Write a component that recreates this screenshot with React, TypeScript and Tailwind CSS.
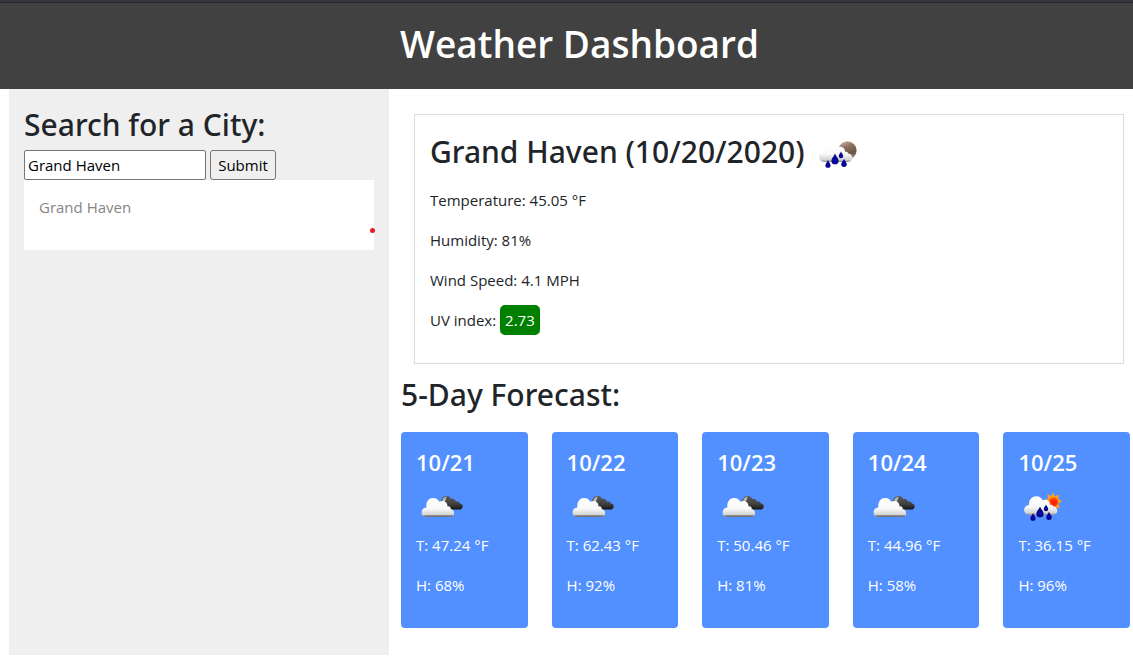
import React, { useId, useState } from "react";

type Condition = "clouds" | "rain-day" | "rain-night";

const drops = [
  { x: 15, y: 34, s: 1 },
  { x: 22, y: 29, s: 1.4 },
  { x: 28, y: 25, s: 0.85 },
  { x: 31, y: 33, s: 1.05 },
];

function WeatherIcon({ condition, label }: { condition: Condition; label: string }) {
  const id = useId();
  const light = `${id}-light`;
  const dark = `${id}-dark`;
  const moon = `${id}-moon`;
  const sun = `${id}-sun`;
  return (
    <svg viewBox="0 0 50 50" className="inline-block size-[50px] shrink-0" role="img" aria-label={label}>
      <defs>
        <linearGradient id={light} x1="0" y1="0" x2="0" y2="1">
          <stop offset="0" stopColor="#ffffff" />
          <stop offset="0.55" stopColor="#fafafa" />
          <stop offset="0.88" stopColor="#d4d4d4" />
          <stop offset="1" stopColor="#8a8a8a" />
        </linearGradient>
        <linearGradient id={dark} x1="0" y1="0" x2="0" y2="1">
          <stop offset="0" stopColor="#5a5a5a" />
          <stop offset="0.6" stopColor="#404040" />
          <stop offset="1" stopColor="#151515" />
        </linearGradient>
        <linearGradient id={moon} x1="0.2" y1="0" x2="0.6" y2="1">
          <stop offset="0" stopColor="#c9b7ab" />
          <stop offset="0.35" stopColor="#8d7361" />
          <stop offset="0.75" stopColor="#6b5344" />
          <stop offset="1" stopColor="#a8917f" />
        </linearGradient>
        <radialGradient id={sun} cx="0.55" cy="0.6" r="0.6">
          <stop offset="0" stopColor="#ff1500" />
          <stop offset="0.6" stopColor="#ff3a0a" />
          <stop offset="1" stopColor="#ff9020" />
        </radialGradient>
      </defs>
      {condition === "clouds" ? (
        <>
          <path
            d="M25 21 C24.5 16.5 27 13 30.5 13 C33 13 34.5 14.3 35 16 C36.5 15.4 39.5 16 40 18.8 C42 18 43.7 19.2 43.8 20.6 C47.8 20.8 47.8 26.5 43.5 26.5 H31 Z"
            fill={`url(#${dark})`}
          />
          <path d="M26 19.5 C26 16 28 13.8 30.8 13.8 C29.8 15.2 30.3 16.6 28.8 18.8 Z" fill="#b8b8b8" />
          <path
            d="M10.5 34 C4 34 4 25 10.4 24.5 C9.7 19.3 12.5 15 17 15 C20.3 15 22.2 16.6 23.3 18.8 C26.8 16.8 31.7 18.7 31.5 23.4 C33.8 22.7 35 24.5 34.7 26.2 C39.3 26.2 39.3 34 34.5 34 Z"
            fill={`url(#${light})`}
          />
          <path d="M7.4 32.3 H37 C36.5 33.5 35.6 34 34.5 34 H10.5 C9.2 34 8 33.4 7.4 32.3 Z" fill="#686868" opacity="0.75" />
        </>
      ) : (
        <>
          {condition === "rain-day" ? (
            <>
              <path
                d="M34.7 9.3 L36.7 13.2 L41 11.4 L40.2 15.8 L44 18.5 L40.2 20.5 L42 25 L37.4 24.4 L34.5 28 L31.8 24 L27.5 24.5 L29.3 20.3 L26 17.5 L30 15.7 L29.4 11.3 L33.3 13 Z"
                fill="#ffa01c"
              />
              <circle cx="35.3" cy="18.8" r="5" fill={`url(#${sun})`} />
            </>
          ) : (
            <circle cx="34.4" cy="20.4" r="9.2" fill={`url(#${moon})`} />
          )}
          <path
            d="M11.2 32 C4.3 31.5 4.6 22.4 11 22 C10.5 17 14.1 13.3 18.3 13.3 C21.6 13.3 23.7 15.1 24.6 17.3 C28.3 15.6 32.4 18.2 32.1 22 C33.7 21.5 35 22.2 35.2 23.6 C40.8 23.8 40.6 31.7 35.2 32 Z"
            fill={`url(#${light})`}
          />
          {drops.map((d) => (
            <g key={d.x} transform={`translate(${d.x} ${d.y}) scale(${d.s})`}>
              <path d="M0 -4 C0.6 -2 2.6 -0.6 2.6 1.2 A2.6 2.6 0 0 1 -2.6 1.2 C-2.6 -0.6 -0.6 -2 0 -4 Z" fill="#06068c" />
              <circle cx="0.2" cy="0.8" r="1.1" fill="#0a0ac0" />
            </g>
          ))}
        </>
      )}
    </svg>
  );
}

const forecast: { date: string; temp: string; humidity: string; condition: Condition; label: string }[] = [
  { date: "10/21", temp: "47.24", humidity: "68", condition: "clouds", label: "Broken clouds" },
  { date: "10/22", temp: "62.43", humidity: "92", condition: "clouds", label: "Broken clouds" },
  { date: "10/23", temp: "50.46", humidity: "81", condition: "clouds", label: "Broken clouds" },
  { date: "10/24", temp: "44.96", humidity: "58", condition: "clouds", label: "Broken clouds" },
  { date: "10/25", temp: "36.15", humidity: "96", condition: "rain-day", label: "Rain" },
];

export default function App() {
  const [city, setCity] = useState("Grand Haven");
  return (
    <div className="bg-white font-['Open_Sans',sans-serif] text-[15px] leading-6 text-[#212529]">
      <header className="border-t-2 border-[#36363c] bg-[#414141]">
        <div className="border-t border-[#28282c] pt-[17px] pb-[21px] pl-[26px]">
          <h1 className="text-center text-[37px] leading-[48px] font-semibold text-white">Weather Dashboard</h1>
        </div>
      </header>

      <div className="flex pl-[9px]">
        <aside className="w-[380px] shrink-0 bg-[#efefef] p-[15px]">
          <h2 className="mb-1 font-['Noto_Sans',sans-serif] text-[30px] leading-[42px] font-medium">
            <label htmlFor="city">Search for a City:</label>
          </h2>
          <form className="flex gap-1" onSubmit={(e) => e.preventDefault()}>
            <input
              id="city"
              type="text"
              value={city}
              onChange={(e) => setCity(e.target.value)}
              className="h-[30px] w-[182px] rounded-[2px] border border-[#767676] bg-white px-[3px] text-black"
            />
            <button type="submit" className="h-[30px] w-[66px] rounded-[3px] border border-[#767676] bg-[#efefef] text-black">
              Submit
            </button>
          </form>
          <div className="relative bg-white p-[15px]">
            <p className="mb-4 text-[#868686]">Grand Haven</p>
            <span className="absolute -right-px bottom-[17px] size-[5px] rounded-full bg-[#e81c24]" />
          </div>
        </aside>

        <main className="min-w-0 grow pb-[27px]">
          <section className="mt-[25px] mr-[9px] ml-[25px] border border-[#dcdcdc] p-[15px]">
            <div className="mb-2 flex items-start gap-2">
              <h2 className="font-['Noto_Sans',sans-serif] text-[30px] leading-[44px] font-medium">Grand Haven (10/20/2020)</h2>
              <WeatherIcon condition="rain-night" label="Rain at night" />
            </div>
            <p className="mb-4">Temperature: 45.05 °F</p>
            <p className="mb-4">Humidity: 81%</p>
            <p className="mb-4">Wind Speed: 4.1 MPH</p>
            <p className="mb-4">
              UV index: <span className="rounded-[5px] bg-[#008000] p-[5px] text-white">2.73</span>
            </p>
          </section>

          <section className="mt-2.5 mr-[3px] ml-3">
            <h2 className="mb-4 font-['Noto_Sans',sans-serif] text-[30px] leading-[42px] font-medium">5-Day Forecast:</h2>
            <div className="grid grid-cols-5 gap-6">
              {forecast.map((day) => (
                <article key={day.date} className="rounded-[4px] bg-[#528fff] p-[15px] text-white">
                  <h4 className="mb-1.5 text-[22px] leading-[30px] font-semibold">{day.date}</h4>
                  <div className="flex">
                    <WeatherIcon condition={day.condition} label={day.label} />
                  </div>
                  <p className="mb-4">T: {day.temp} °F</p>
                  <p className="mb-4">H: {day.humidity}%</p>
                </article>
              ))}
            </div>
          </section>
        </main>
      </div>
    </div>
  );
}
